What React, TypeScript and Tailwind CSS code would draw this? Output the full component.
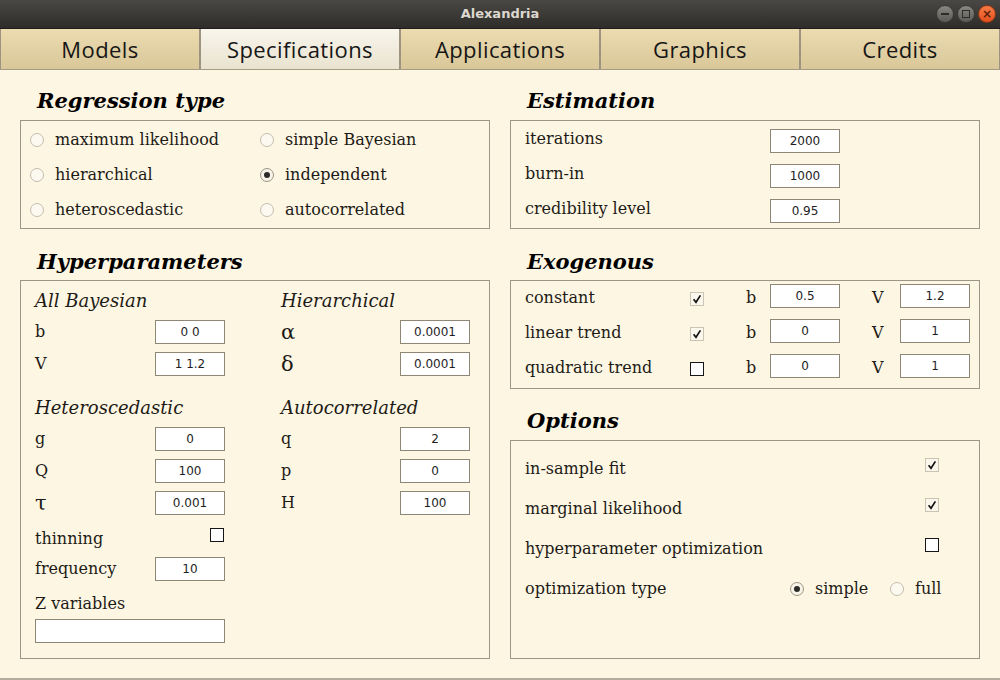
import React from 'react';

function Radio({ checked }: { checked?: boolean }) {
  return (
    <span
      className={
        checked
          ? 'w-[14px] h-[14px] shrink-0 rounded-full border border-[#9d9687] bg-[#f7f3e8] flex items-center justify-center'
          : 'block w-[14px] h-[14px] shrink-0 rounded-full border border-[#c4bdad] bg-[#fcf9f1]'
      }
    >
      {checked && <span className="w-[6px] h-[6px] rounded-full bg-[#2b2a27]" />}
    </span>
  );
}

function Check({ checked }: { checked?: boolean }) {
  if (!checked) {
    return <span className="block w-[14px] h-[14px] shrink-0 border border-[#161616] bg-white" />;
  }
  return (
    <span className="w-[14px] h-[14px] shrink-0 border border-[#cbc4b2] bg-[#fbf7ec] flex items-center justify-center">
      <svg width="10" height="10" viewBox="0 0 10 10">
        <path d="M1.6 5.2 L4 8.2 L8.4 1.4" fill="none" stroke="#111" strokeWidth="1.7" />
      </svg>
    </span>
  );
}

function Field({ value, wide }: { value: string; wide?: boolean }) {
  return (
    <div
      className={
        (wide ? 'w-[190px] ' : 'w-[70px] ') +
        "h-[24px] shrink-0 border border-[#8e8776] bg-white flex items-center justify-center font-['DejaVu_Sans',sans-serif] text-[12px] text-[#1e1e1e]"
      }
    >
      {value}
    </div>
  );
}

function Heading({ children, pt }: { children: React.ReactNode; pt: string }) {
  return (
    <div className={pt + ' pl-[17px] text-[21px] leading-[24px] font-bold italic text-black'}>{children}</div>
  );
}

function ParamRow({ label, value, greek }: { label: string; value?: string; greek?: boolean }) {
  return (
    <div className="h-[32px] flex items-center justify-between">
      <span className={greek ? 'text-[21px] leading-[24px]' : 'text-[16px] leading-[24px]'}>{label}</span>
      {value !== undefined && <Field value={value} />}
    </div>
  );
}

function Sub({ children }: { children: React.ReactNode }) {
  return <div className="h-[32px] flex items-center italic text-[18px]">{children}</div>;
}

const tabs = ['Models', 'Specifications', 'Applications', 'Graphics', 'Credits'];

export default function App() {
  return (
    <div className="w-[1000px] h-[680px] overflow-hidden bg-[#fdf6e3] flex flex-col font-['DejaVu_Serif',serif] text-[#1d1b17]">
      {/* title bar */}
      <div className="h-[29px] shrink-0 relative flex items-center justify-center bg-gradient-to-b from-[#4a4844] to-[#2e2d29] border-b border-[#1f1e1b]">
        <span className="font-['DejaVu_Sans',sans-serif] font-bold text-[13px] text-[#dcd8cf]">Alexandria</span>
        <div className="absolute right-[4px] top-[5px] flex gap-[3px]">
          <span className="w-[18px] h-[18px] rounded-full bg-gradient-to-b from-[#8a8883] to-[#5c5a56] border border-[#3a3935] flex items-center justify-center">
            <span className="w-[8px] h-[2px] bg-[#2d2c29]" />
          </span>
          <span className="w-[18px] h-[18px] rounded-full bg-gradient-to-b from-[#8a8883] to-[#5c5a56] border border-[#3a3935] flex items-center justify-center">
            <span className="w-[8px] h-[8px] border border-[#2d2c29]" />
          </span>
          <span className="w-[18px] h-[18px] rounded-full bg-gradient-to-b from-[#f77a45] to-[#e3501c] border border-[#8a3514] flex items-center justify-center text-[#5a1e08] text-[12px] leading-none font-['DejaVu_Sans',sans-serif] font-bold">
            ×
          </span>
        </div>
      </div>

      {/* tabs */}
      <div className="h-[41px] shrink-0 grid grid-cols-5 border-b border-[#a49b83]">
        {tabs.map((t) => (
          <div
            key={t}
            className={
              (t === 'Specifications'
                ? 'bg-gradient-to-b from-[#f8f5ec] to-[#e9e3cf] '
                : 'bg-gradient-to-b from-[#ecdcb0] to-[#d9c799] ') +
              "border-r border-l border-[#9c947e] flex items-center justify-center font-['Open_Sans',sans-serif] text-[22px] tracking-[0.4px] text-[#161616]"
            }
          >
            {t}
          </div>
        ))}
      </div>

      {/* content */}
      <div className="flex gap-[20px] px-[20px]">
        {/* left column */}
        <div className="w-[470px] flex flex-col">
          <div className="h-[50px]">
            <Heading pt="pt-[19px]">Regression type</Heading>
          </div>
          <div className="h-[109px] border border-[#9d9585] pt-[1px] pl-[9px] grid grid-cols-[230px_1fr]">
            {[
              ['maximum likelihood', false, 'simple Bayesian', false],
              ['hierarchical', false, 'independent', true],
              ['heteroscedastic', false, 'autocorrelated', false],
            ].map((r) => (
              <React.Fragment key={r[0] as string}>
                <div className="h-[35px] flex items-center gap-[11px] text-[16px]">
                  <Radio checked={r[1] as boolean} />
                  {r[0]}
                </div>
                <div className="h-[35px] flex items-center gap-[11px] text-[16px]">
                  <Radio checked={r[3] as boolean} />
                  {r[2]}
                </div>
              </React.Fragment>
            ))}
          </div>

          <div className="h-[51px]">
            <Heading pt="pt-[21px]">Hyperparameters</Heading>
          </div>
          <div className="h-[379px] border border-[#9d9585] pt-[3px] pl-[14px] flex gap-[56px]">
            <div className="w-[190px] flex flex-col">
              <Sub>All Bayesian</Sub>
              <ParamRow label="b" value="0 0" />
              <ParamRow label="V" value="1 1.2" />
              <div className="h-[11px]" />
              <Sub>Heteroscedastic</Sub>
              <ParamRow label="g" value="0" />
              <ParamRow label="Q" value="100" />
              <ParamRow label="τ" value="0.001" greek />
              <div className="h-[34px] flex items-center justify-between">
                <span className="text-[16px] leading-[24px] mt-[5px]">thinning</span>
                <span className="mr-[1px] -mt-[3px]">
                  <Check />
                </span>
              </div>
              <ParamRow label="frequency" value="10" />
              <div className="h-[34px] flex items-center text-[16px] pt-[3px]">Z variables</div>
              <Field value="" wide />
            </div>
            <div className="w-[189px] flex flex-col">
              <Sub>Hierarchical</Sub>
              <ParamRow label="α" value="0.0001" greek />
              <ParamRow label="δ" value="0.0001" greek />
              <div className="h-[11px]" />
              <Sub>Autocorrelated</Sub>
              <ParamRow label="q" value="2" />
              <ParamRow label="p" value="0" />
              <ParamRow label="H" value="100" />
            </div>
          </div>
        </div>

        {/* right column */}
        <div className="w-[470px] flex flex-col">
          <div className="h-[50px]">
            <Heading pt="pt-[19px]">Estimation</Heading>
          </div>
          <div className="h-[109px] border border-[#9d9585] pt-[8px] pl-[14px] flex flex-col gap-[11px]">
            {[
              ['iterations', '2000'],
              ['burn-in', '1000'],
              ['credibility level', '0.95'],
            ].map(([l, v]) => (
              <div key={l} className="h-[24px] flex items-start">
                <span className="w-[245px] text-[16px] leading-[19px]">{l}</span>
                <Field value={v} />
              </div>
            ))}
          </div>

          <div className="h-[51px]">
            <Heading pt="pt-[21px]">Exogenous</Heading>
          </div>
          <div className="h-[109px] border border-[#9d9585] pt-[3px] pl-[14px] flex flex-col gap-[11px]">
            {[
              ['constant', true, '0.5', '1.2'],
              ['linear trend', true, '0', '1'],
              ['quadratic trend', false, '0', '1'],
            ].map((r) => (
              <div key={r[0] as string} className="h-[24px] flex items-center text-[16px]">
                <span className="w-[165px] mt-[4px]">{r[0]}</span>
                <span className="mt-[5px]">
                  <Check checked={r[1] as boolean} />
                </span>
                <span className="ml-[42px] w-[24px] mt-[4px]">b</span>
                <Field value={r[2] as string} />
                <span className="ml-[32px] w-[28px] mt-[4px]">V</span>
                <Field value={r[3] as string} />
              </div>
            ))}
          </div>

          <div className="h-[51px]">
            <Heading pt="pt-[20px]">Options</Heading>
          </div>
          <div className="h-[219px] border border-[#9d9585] pt-[7px] pl-[14px] flex flex-col">
            {[
              ['in-sample fit', true],
              ['marginal likelihood', true],
              ['hyperparameter optimization', false],
            ].map(([l, c]) => (
              <div key={l as string} className="h-[40px] flex items-center text-[16px]">
                <span className="w-[400px] mt-[1px]">{l}</span>
                <span className="mb-[7px]">
                  <Check checked={c as boolean} />
                </span>
              </div>
            ))}
            <div className="h-[40px] flex items-center text-[16px]">
              <span className="w-[265px] mt-[1px]">optimization type</span>
              <div className="w-[100px] flex items-center gap-[11px] mt-[2px]">
                <Radio checked />
                <span className="-mt-[1px]">simple</span>
              </div>
              <div className="flex items-center gap-[11px] mt-[2px]">
                <Radio />
                <span className="-mt-[1px]">full</span>
              </div>
            </div>
          </div>
        </div>
      </div>
      <div className="mt-auto h-[2px] bg-[#b3ac9c]" />
    </div>
  );
}
